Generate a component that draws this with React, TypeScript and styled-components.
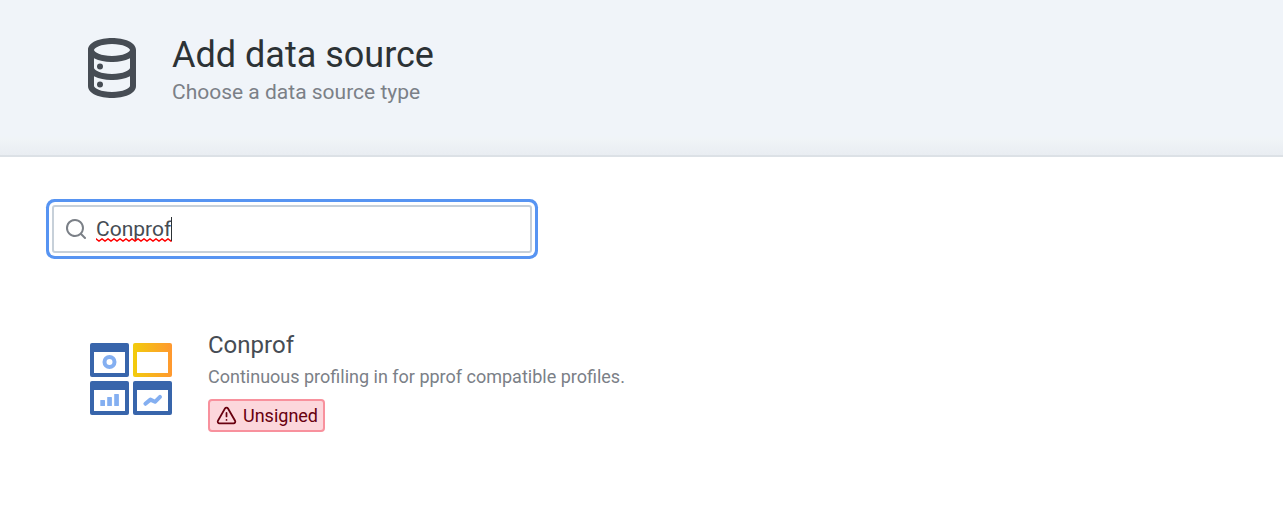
import React, { useState } from "react";
import styled, { createGlobalStyle } from "styled-components";

const GlobalStyle = createGlobalStyle`
  *, *::before, *::after { box-sizing: border-box; }
  body {
    margin: 0;
    background: #ffffff;
    color: #464c54;
    font-family: Roboto, "Liberation Sans", sans-serif;
  }
  h1, h2, p, ul { margin: 0; padding: 0; font-weight: 400; }
`;

const PageHeader = styled.header`
  display: flex;
  align-items: flex-start;
  gap: 24px;
  padding: 32px 76px 49px;
  border-bottom: 2px solid #dce1e6;
  background: linear-gradient(
    #f0f4f9 0, #f0f4f9 calc(100% - 20px), #f0f4f7 calc(100% - 16px), #e9edf2 100%
  );
`;

const HeaderIcon = styled.svg`
  flex: none;
  width: 72px;
  height: 72px;
  fill: #464c54;
`;

const Title = styled.h1`
  font-size: 36px;
  line-height: 46px;
  color: #2c3235;
`;

const Subtitle = styled.p`
  font-size: 21px;
  line-height: 28px;
  color: #7b8087;
`;

const Content = styled.main`
  display: flex;
  flex-direction: column;
  gap: 73px;
  padding: 48px 52px;
`;

const SearchField = styled.label`
  position: relative;
  display: flex;
  align-items: center;
  width: 100%;
  max-width: 480px;
  height: 48px;
  padding: 0 10px;
  gap: 8px;
  border: 2px solid #c7d0d9;
  border-radius: 3px;
  background: #ffffff;
  box-shadow: 0 0 0 3px #ffffff, 0 0 0 6px #5794f2;
`;

const SearchIcon = styled.svg`
  flex: none;
  width: 24px;
  height: 24px;
  fill: #7b8087;
`;

const SearchInput = styled.input`
  flex: 1;
  min-width: 0;
  height: 32px;
  padding: 0;
  border: 0;
  outline: 0;
  background: transparent;
  color: #464c54;
  font: 21px/32px Roboto, "Liberation Sans", sans-serif;
`;

const TypingMarks = styled.svg`
  position: absolute;
  left: 42px;
  top: 10px;
  width: 77px;
  height: 26px;
  pointer-events: none;
`;

const SourceList = styled.ul`
  list-style: none;
`;

const SourceCard = styled.li`
  display: flex;
  align-items: center;
  gap: 36px;
  padding: 0 38px;
`;

const SourceLogo = styled.svg`
  flex: none;
  width: 82px;
  height: 72px;
`;

const SourceDetails = styled.div`
  display: flex;
  flex-direction: column;
  align-items: flex-start;
`;

const SourceName = styled.h2`
  font-size: 24px;
  line-height: 38px;
  color: #464c54;
`;

const SourceDescription = styled.p`
  font-size: 18px;
  line-height: 26px;
  color: #7b8087;
`;

const Badge = styled.span`
  display: flex;
  align-items: center;
  gap: 6px;
  height: 33px;
  margin-top: 9px;
  padding: 0 5px 0 6px;
  border: 2px solid #f8919d;
  border-radius: 4px;
  background: #fcd7dc;
  color: #68000f;
  font-size: 18px;
  line-height: 24px;
`;

const BadgeIcon = styled.svg`
  flex: none;
  width: 21px;
  height: 21px;
  fill: currentColor;
`;

function ConprofLogo() {
  return (
    <SourceLogo viewBox="0 0 82 72" aria-hidden="true">
      <defs>
        <linearGradient id="panelGold" x1="0" x2="1" y1="0" y2="0">
          <stop offset="0" stopColor="#f2cc0c" />
          <stop offset="1" stopColor="#ff9830" />
        </linearGradient>
      </defs>
      <g fill="#3865ab">
        <rect width="39" height="34" rx="2" />
        <rect y="38" width="39" height="34" rx="2" />
        <rect x="43" y="38" width="39" height="34" rx="2" />
      </g>
      <rect x="43" width="39" height="34" rx="2" fill="url(#panelGold)" />
      <g fill="#fff">
        <rect x="4" y="9" width="31" height="21" />
        <rect x="47" y="9" width="31" height="21" />
        <rect x="4" y="47" width="31" height="21" />
        <rect x="47" y="47" width="31" height="21" />
      </g>
      <circle cx="19.5" cy="19" r="5" fill="none" stroke="#84aff1" strokeWidth="4" />
      <g fill="#84aff1">
        <rect x="10.3" y="57" width="4.7" height="6" rx="0.5" />
        <rect x="17.2" y="54" width="4.7" height="9" rx="0.5" />
        <rect x="24.2" y="51" width="4.7" height="12" rx="0.5" />
      </g>
      <path
        d="M55.4 60.8 60.4 56.6 65 58.8 70 53.8"
        fill="none"
        stroke="#84aff1"
        strokeWidth="4"
        strokeLinecap="round"
        strokeLinejoin="round"
      />
    </SourceLogo>
  );
}

export default function App() {
  const [query, setQuery] = useState("Conprof");

  return (
    <>
      <GlobalStyle />
      <PageHeader>
        <HeaderIcon viewBox="0 0 24 24" aria-hidden="true">
          <path d="M8,16.5a1,1,0,1,0,1,1A1,1,0,0,0,8,16.5ZM12,2C8,2,4,3.37,4,6V18c0,2.63,4,4,8,4s8-1.37,8-4V6C20,3.37,16,2,12,2Zm6,16c0,.71-2.28,2-6,2s-6-1.29-6-2V14.73A13.16,13.16,0,0,0,12,16a13.16,13.16,0,0,0,6-1.27Zm0-6c0,.71-2.28,2-6,2s-6-1.29-6-2V8.73A13.16,13.16,0,0,0,12,10a13.16,13.16,0,0,0,6-1.27ZM12,8C8.28,8,6,6.71,6,6s2.28-2,6-2,6,1.29,6,2S15.72,8,12,8ZM8,10.5a1,1,0,1,0,1,1A1,1,0,0,0,8,10.5Z" />
        </HeaderIcon>
        <div>
          <Title>Add data source</Title>
          <Subtitle>Choose a data source type</Subtitle>
        </div>
      </PageHeader>
      <Content>
        <SearchField>
          <SearchIcon viewBox="0 0 24 24" aria-hidden="true">
            <path d="M21.71,20.29,18,16.61A9,9,0,1,0,16.61,18l3.68,3.68a1,1,0,0,0,1.42,0A1,1,0,0,0,21.71,20.29ZM11,18a7,7,0,1,1,7-7A7,7,0,0,1,11,18Z" />
          </SearchIcon>
          <SearchInput
            type="text"
            aria-label="Filter by name or type"
            spellCheck={false}
            value={query}
            onChange={(e) => setQuery(e.target.value)}
          />
          {query === "Conprof" && (
            <TypingMarks viewBox="0 0 77 26" aria-hidden="true">
              <defs>
                <pattern id="squiggle" width="6" height="4" y="21" patternUnits="userSpaceOnUse">
                  <path d="M-1.5 2 0 .9 3 3.1 6 .9 7.5 2" fill="none" stroke="#f00" strokeWidth="1.5" />
                </pattern>
              </defs>
              <rect y="21" width="76" height="4" fill="url(#squiggle)" />
              <rect x="75" width="1" height="24" fill="#2c3235" />
            </TypingMarks>
          )}
        </SearchField>
        <SourceList>
          <SourceCard>
            <ConprofLogo />
            <SourceDetails>
              <SourceName>Conprof</SourceName>
              <SourceDescription>Continuous profiling in for pprof compatible profiles.</SourceDescription>
              <Badge>
                <BadgeIcon viewBox="0 0 24 24" aria-hidden="true">
                  <path d="M12,16a1,1,0,1,0,1,1A1,1,0,0,0,12,16Zm10.67,1.47-8.05-14a3,3,0,0,0-5.24,0l-8,14A3,3,0,0,0,3.94,22H20.06a3,3,0,0,0,2.61-4.53Zm-1.73,2a1,1,0,0,1-.88.51H3.94a1,1,0,0,1-.88-.51,1,1,0,0,1,0-1l8-14a1,1,0,0,1,1.78,0l8.05,14A1,1,0,0,1,20.94,19.49ZM12,8a1,1,0,0,0-1,1v4a1,1,0,0,0,2,0V9A1,1,0,0,0,12,8Z" />
                </BadgeIcon>
                Unsigned
              </Badge>
            </SourceDetails>
          </SourceCard>
        </SourceList>
      </Content>
    </>
  );
}
